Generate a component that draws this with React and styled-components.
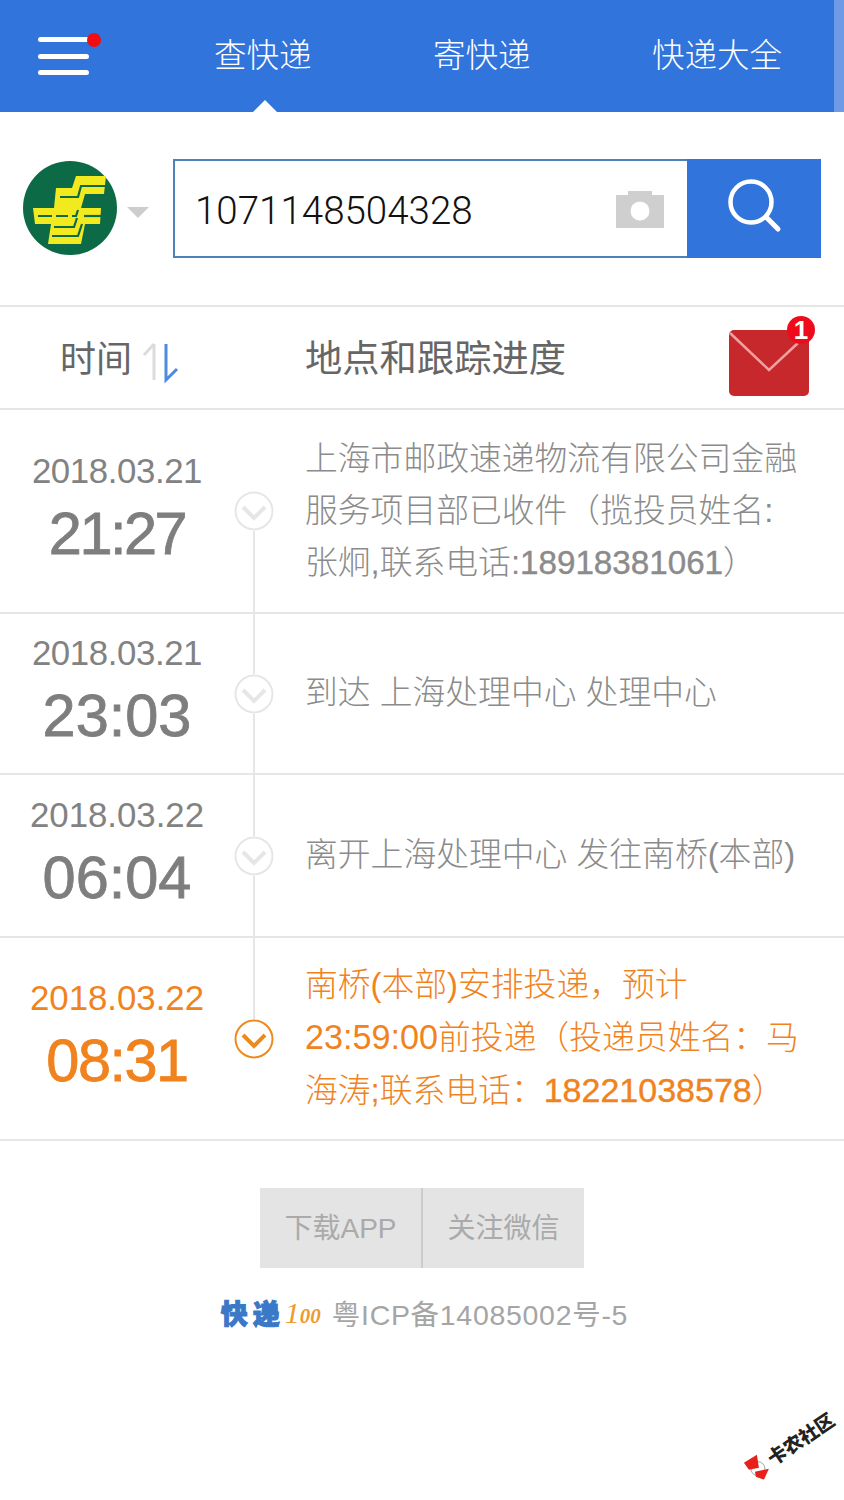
import styled, { createGlobalStyle } from "styled-components";

const FONT = `"Liberation Sans", "Noto Sans CJK SC", sans-serif`;

const GlobalStyle = createGlobalStyle`
  html, body {
    margin: 0;
    padding: 0;
    background: #fff;
    font-family: ${FONT};
  }
`;

const Page = styled.div`
  position: relative;
  width: 844px;
  height: 1500px;
  overflow: hidden;
  background: #fff;
`;

// Header
const Header = styled.header`
  display: flex;
  height: 112px;
  background: #3174dc;
`;
const HeaderMain = styled.div`
  flex: 1;
  display: flex;
  align-items: center;
  padding-left: 38px;
`;
const HeaderEdge = styled.div`
  width: 10px;
  background: #6f9ae6;
`;
const MenuButton = styled.div`
  position: relative;
  display: flex;
  flex-direction: column;
  gap: 11.5px;
  width: 51px;
`;
const MenuBar = styled.span`
  display: block;
  height: 5px;
  border-radius: 3px;
  background: #fff;
`;
const MenuDot = styled.span`
  position: absolute;
  top: -4px;
  right: -12px;
  width: 14px;
  height: 14px;
  border-radius: 50%;
  background: #f20d12;
`;
const Tabs = styled.nav`
  display: flex;
  gap: 121.5px;
  margin-left: 125px;
  margin-top: -1px;
`;
const Tab = styled.a`
  position: relative;
  font-size: 32.5px;
  line-height: 48px;
  color: #fff;
  font-weight: 300;
  ${(p) =>
    p.$active &&
    `&::after {
      content: "";
      position: absolute;
      left: 50%;
      bottom: -32px;
      margin-left: -10px;
      border-left: 12px solid transparent;
      border-right: 12px solid transparent;
      border-bottom: 12px solid #fff;
    }`}
`;

// Search
const SearchRow = styled.section`
  display: flex;
  align-items: center;
  height: 195px;
  padding: 0 23px 2px;
  box-sizing: border-box;
  border-bottom: 2px solid #e6e6e6;
`;
const Caret = styled.span`
  width: 0;
  height: 0;
  margin: 10px 24px 0 10px;
  border-left: 11px solid transparent;
  border-right: 11px solid transparent;
  border-top: 11px solid #cdcdcd;
`;
const SearchBox = styled.div`
  display: flex;
  width: 648px;
  height: 99px;
  margin-top: 2px;
`;
const InputWrap = styled.div`
  flex: 1;
  display: flex;
  align-items: center;
  justify-content: space-between;
  padding: 0 23px 0 20px;
  border: 2px solid #4f80b9;
  border-right: 0;
  box-sizing: border-box;
`;
const Number = styled.span`
  margin-top: 4px;
  font-family: Roboto, ${FONT};
  font-weight: 300;
  font-size: 38.5px;
  color: #111;
`;
const SearchButton = styled.div`
  display: flex;
  align-items: center;
  justify-content: center;
  width: 134px;
  background: #3174dc;
`;

// Table head
const TableHead = styled.div`
  display: flex;
  align-items: center;
  height: 101px;
  border-bottom: 2px solid #e6e6e6;
`;
const TimeHead = styled.div`
  display: flex;
  align-items: center;
  width: 305px;
  padding-left: 60px;
  margin-top: -4px;
  box-sizing: border-box;
  font-size: 36px;
  color: #666;
`;
const PlaceHead = styled.div`
  flex: 1;
  margin-top: -4px;
  font-size: 37.3px;
  color: #666;
`;
const Mail = styled.div`
  position: relative;
  width: 80px;
  height: 66px;
  margin-right: 35px;
  margin-top: 11px;
  border-radius: 5px;
  background: #c7282b;
`;
const MailBadge = styled.span`
  position: absolute;
  top: -14px;
  right: -6px;
  width: 28px;
  height: 28px;
  border-radius: 50%;
  background: #ee0c1c;
  color: #fff;
  font-size: 26px;
  font-weight: 700;
  line-height: 28px;
  text-align: center;
`;

// Timeline rows
const Row = styled.div`
  display: flex;
  align-items: center;
  height: ${(p) => p.$height}px;
  border-bottom: 2px solid #e6e6e6;
  color: ${(p) => (p.$active ? "#f0831e" : "#8b8b8b")};
`;
const TimeCell = styled.div`
  width: 234px;
  text-align: center;
  flex-shrink: 0;
`;
const DateText = styled.div`
  font-size: 34.8px;
  line-height: 40px;
  margin-top: -3px;
  letter-spacing: ${(p) => p.$spacing}px;
  color: ${(p) => (p.$active ? "#f0831e" : "#828282")};
`;
const TimeText = styled.div`
  font-size: 59.5px;
  line-height: 70px;
  margin-top: 8px;
  letter-spacing: ${(p) => p.$spacing}px;
  -webkit-text-stroke: 0.8px currentColor;
  color: ${(p) => (p.$active ? "#f0831e" : "#7e7e7e")};
`;
const NodeCell = styled.div`
  position: relative;
  align-self: stretch;
  display: flex;
  align-items: center;
  justify-content: center;
  width: 40px;
  flex-shrink: 0;
  &::before {
    content: "";
    position: absolute;
    left: 19px;
    width: 2px;
    background: #e6e6e6;
    top: ${(p) => (p.$first ? "50%" : "0")};
    bottom: ${(p) => (p.$last ? "50%" : "-2px")};
  }
`;
const NodeIcon = styled.svg`
  position: relative;
  display: block;
  background: #fff;
  border-radius: 50%;
  color: ${(p) => (p.$active ? "#ee8a1d" : "#e6e6e6")};
`;
const Desc = styled.div`
  margin-left: 31px;
  margin-top: -1px;
  font-size: 32.8px;
  line-height: 52px;
  white-space: nowrap;
  font-weight: 300;
`;
const Latin = styled.span`
  font-size: 34.2px;
`;
const Phone = styled.span`
  font-size: ${(p) => p.$size}px;
  -webkit-text-stroke: 0.4px currentColor;
`;

// Footer
const Footer = styled.footer`
  display: flex;
  flex-direction: column;
  align-items: center;
  padding-top: 47px;
`;
const Buttons = styled.div`
  display: flex;
  height: 80px;
  background: #e4e4e4;
`;
const FootButton = styled.div`
  display: flex;
  align-items: center;
  justify-content: center;
  box-sizing: border-box;
  width: ${(p) => p.$width}px;
  padding-bottom: 4px;
  font-size: 28px;
  color: #aaa;
  & + & {
    border-left: 2px solid #ccc;
  }
`;
const Record = styled.div`
  display: flex;
  align-items: center;
  margin-top: 24px;
  margin-left: 5px;
  font-size: 28.5px;
  line-height: 42px;
  letter-spacing: 0.7px;
  color: #a5a5a5;
`;
const BrandName = styled.span`
  font-size: 27px;
  font-weight: 900;
  color: #3a78c8;
  -webkit-text-stroke: 1px #3a78c8;
  letter-spacing: 5px;
`;
const BrandNum = styled.span`
  margin: 0 11px 0 0;
  font-family: "Liberation Serif", serif;
  font-style: italic;
  font-size: 30px;
  letter-spacing: 0;
  color: #ee9a2e;
  small {
    font-size: 21px;
    font-weight: 700;
  }
`;

// Watermark over the page corner
const Watermark = styled.div`
  position: absolute;
  left: 744px;
  top: 1455px;
  display: flex;
  align-items: center;
  gap: 2px;
  height: 25px;
  transform: rotate(-34deg);
  transform-origin: 12px 50%;
  font-size: 19px;
  font-weight: 900;
  color: #222;
  white-space: nowrap;
`;

const ChinaPostLogo = () => (
  <svg width="94" height="94" viewBox="5 5 94 94" style={{ display: "block", flexShrink: 0 }}>
    <circle cx="52" cy="52" r="47" fill="#0c6a46" />
    <path
      fill="#f2ea1f"
      d="M58 20 H88 L86 38 H67 L63 52 H83 L82 68 H67 L63 88 H30 L33 68 H17 L15 52 H36 L38 32 H54 Z"
    />
    <g fill="none" stroke="#0c6a46" strokeWidth="2.2">
      <path d="M42 41 H60 L63 30 H88" />
      <path d="M20 60 H34 M38 60 H50 M54 60 H58 L60 54" />
      <path d="M66 60 H83" />
      <path d="M36 71 H56 L59 62" />
      <path d="M34 80 H60 L64 68" />
    </g>
  </svg>
);

const MenuIcon = () => (
  <MenuButton>
    <MenuBar />
    <MenuBar />
    <MenuBar />
    <MenuDot />
  </MenuButton>
);

const CameraIcon = () => (
  <svg width="48" height="38" viewBox="0 0 48 38" style={{ marginTop: 2 }}>
    <path fill="#cfcfcf" d="M12 0 H36 V4 H48 V37 H0 V4 H12 Z" />
    <circle cx="24" cy="20" r="9.5" fill="#fff" />
  </svg>
);

const SearchIcon = () => (
  <svg width="56" height="56" viewBox="0 0 56 56" style={{ marginTop: -3, marginLeft: 1 }}>
    <circle cx="24" cy="23" r="20.5" fill="none" stroke="#fff" strokeWidth="4.5" />
    <path d="M39 38 L51 50" stroke="#fff" strokeWidth="5" strokeLinecap="round" />
  </svg>
);

const SortIcon = () => (
  <svg width="38" height="44" viewBox="0 0 38 44" style={{ marginLeft: 10, marginTop: 12 }}>
    <path d="M12 4 V40 M12 4 L2 15" fill="none" stroke="#dcdcdc" strokeWidth="3" />
    <path d="M24 4 V40 L35 29" fill="none" stroke="#4d8ae0" strokeWidth="3" />
  </svg>
);

const NodeChevron = ({ active }) => (
  <NodeIcon $active={active} width="40" height="40" viewBox="0 0 40 40">
    <circle cx="20" cy="20" r="18.5" fill="none" stroke="currentColor" strokeWidth="2" />
    <path d="M9 16 L20 27 L31 16" fill="none" stroke="currentColor" strokeWidth="4" />
  </NodeIcon>
);

const BowIcon = () => (
  <svg width="25" height="25" viewBox="0 0 25 25" style={{ transform: "rotate(34deg)", flexShrink: 0 }}>
    <circle cx="14" cy="14" r="7" fill="#fff" stroke="#6a9a9a" strokeWidth="0.8" />
    <path fill="#e8201c" d="M0 8 L13 0 L15 13 L5 15 Z" />
    <path fill="#e8201c" d="M11 17 L25 14 L20 25 L12 22 Z" />
  </svg>
);

const events = [
  {
    height: 202,
    date: "2018.03.21",
    dateSpacing: -0.4,
    time: "21:27",
    timeSpacing: -2.5,
    lines: [
      "上海市邮政速递物流有限公司金融",
      "服务项目部已收件（揽投员姓名:",
      <>
        张炯,联系电话:<Phone $size={33.2}>18918381061</Phone>）
      </>,
    ],
  },
  {
    height: 159,
    date: "2018.03.21",
    dateSpacing: -0.4,
    time: "23:03",
    timeSpacing: 0,
    lines: ["到达 上海处理中心 处理中心"],
  },
  {
    height: 161,
    date: "2018.03.22",
    dateSpacing: 0,
    time: "06:04",
    timeSpacing: 0,
    lines: ["离开上海处理中心 发往南桥(本部)"],
  },
  {
    height: 201,
    date: "2018.03.22",
    dateSpacing: 0,
    time: "08:31",
    timeSpacing: -1.5,
    active: true,
    lines: [
      "南桥(本部)安排投递，预计",
      <>
        <Latin>23:59:00</Latin>前投递（投递员姓名：马
      </>,
      <>
        海涛;联系电话：<Phone $size={34}>18221038578</Phone>）
      </>,
    ],
  },
];

const App = () => {
  return (
    <Page>
      <GlobalStyle />
      <Header>
        <HeaderMain>
          <MenuIcon />
          <Tabs>
            <Tab $active>查快递</Tab>
            <Tab>寄快递</Tab>
            <Tab>快递大全</Tab>
          </Tabs>
        </HeaderMain>
        <HeaderEdge />
      </Header>

      <SearchRow>
        <ChinaPostLogo />
        <Caret />
        <SearchBox>
          <InputWrap>
            <Number>1071148504328</Number>
            <CameraIcon />
          </InputWrap>
          <SearchButton>
            <SearchIcon />
          </SearchButton>
        </SearchBox>
      </SearchRow>

      <TableHead>
        <TimeHead>
          时间
          <SortIcon />
        </TimeHead>
        <PlaceHead>地点和跟踪进度</PlaceHead>
        <Mail>
          <svg width="80" height="66" viewBox="0 0 80 66" style={{ display: "block" }}>
            <path d="M1 3 L40 40 L69 13" fill="none" stroke="#f0a0a0" strokeWidth="2.5" />
          </svg>
          <MailBadge>1</MailBadge>
        </Mail>
      </TableHead>

      {events.map((e, i) => (
        <Row key={i} $height={e.height} $active={e.active}>
          <TimeCell>
            <DateText $active={e.active} $spacing={e.dateSpacing}>
              {e.date}
            </DateText>
            <TimeText $active={e.active} $spacing={e.timeSpacing}>
              {e.time}
            </TimeText>
          </TimeCell>
          <NodeCell $first={i === 0} $last={i === events.length - 1}>
            <NodeChevron active={e.active} />
          </NodeCell>
          <Desc>
            {e.lines.map((line, j) => (
              <div key={j}>{line}</div>
            ))}
          </Desc>
        </Row>
      ))}

      <Footer>
        <Buttons>
          <FootButton $width={161}>下载APP</FootButton>
          <FootButton $width={163}>关注微信</FootButton>
        </Buttons>
        <Record>
          <BrandName>快递</BrandName>
          <BrandNum>
            1<small>00</small>
          </BrandNum>
          粤ICP备14085002号-5
        </Record>
      </Footer>

      <Watermark>
        <BowIcon />
        卡农社区
      </Watermark>
    </Page>
  );
};

export default App;
